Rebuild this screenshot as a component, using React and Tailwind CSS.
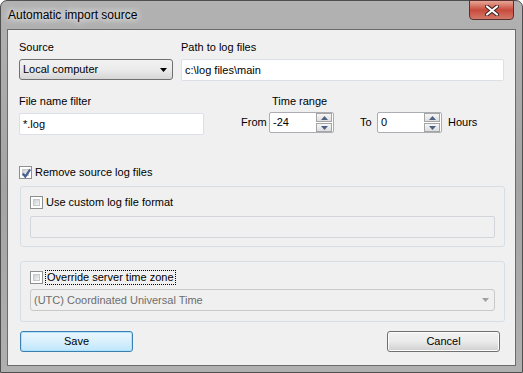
import React from "react";

const font = { fontFamily: '"Liberation Sans", Arial, sans-serif' };

function CheckBox({ checked }) {
  return (
    <span className="w-[13px] h-[13px] border border-[#8e8f8f] bg-white p-[2px] flex shrink-0">
      <span className="flex-1 bg-gradient-to-br from-[#cbcfd5] to-[#f6f6f6] border border-[#c8c8c8] relative">
        {checked && (
          <svg viewBox="0 0 9 9" className="absolute -left-[2px] -top-[2px] w-[11px] h-[11px]">
            <path d="M1.5 4.5 L3.5 7 L7.5 1.2" fill="none" stroke="#4a5f97" strokeWidth="1.8" />
          </svg>
        )}
      </span>
    </span>
  );
}

function Spin({ value }) {
  return (
    <div className="w-[65px] h-[21px] bg-white border border-[#abadb3] rounded-[2px] flex items-center">
      <span className="flex-1 pl-[3px] text-[11px] text-black">{value}</span>
      <div className="flex flex-col gap-px pr-px">
        {[0, 1].map((i) => (
          <span
            key={i}
            className="w-[16px] h-[9px] border border-[#a5a5a5] bg-gradient-to-b from-[#f6f6f6] to-[#dedede] flex items-center justify-center"
          >
            <svg viewBox="0 0 7 4" className="w-[7px] h-[4px]">
              <path d={i === 0 ? "M0 4 L3.5 0 L7 4Z" : "M0 0 L3.5 4 L7 0Z"} fill="#4d6185" />
            </svg>
          </span>
        ))}
      </div>
    </div>
  );
}

export default function App() {
  return (
    <div className="w-[523px] h-[373px] bg-white" style={font}>
      <div className="relative w-[523px] h-[373px] rounded-t-[7px] border border-[#4f4f4f] bg-gradient-to-b from-[#b2b2b2] via-[#a4a4a4] to-[#b0b0b0] flex flex-col">
        {/* title bar */}
        <div className="h-[28px] flex items-center pl-[7px]">
          <span className="text-[12px] text-black [text-shadow:0_0_6px_#fff,0_0_10px_#fff]">Automatic import source</span>
        </div>
        <div className="absolute top-[-1px] right-[8px] w-[45px] h-[20px] rounded-b-[4px] border border-[#5a3030] bg-gradient-to-b from-[#e6a597] via-[#c7493a] to-[#d2786a] flex items-center justify-center">
          <svg viewBox="0 0 14 11" className="w-[14px] h-[11px]">
            <path d="M2 1.5 L12 9.5 M12 1.5 L2 9.5" stroke="#3a2020" strokeWidth="4" strokeLinecap="round" />
            <path d="M2 1.5 L12 9.5 M12 1.5 L2 9.5" stroke="#ffffff" strokeWidth="2.2" strokeLinecap="round" />
          </svg>
        </div>

        {/* client area */}
        <div className="mx-[6px] h-[337px] border border-[#6b6b6b] bg-[#f0f0f0] pl-[11px] pt-[10px] text-[11px] text-black">
          {/* row 1 */}
          <div className="flex gap-[8px]">
            <div className="w-[154px] flex flex-col">
              <span className="h-[15px] leading-[15px]">Source</span>
              <div className="mt-[4px] h-[21px] rounded-[3px] border border-[#707070] bg-gradient-to-b from-[#f2f2f2] via-[#ebebeb] to-[#d6d6d6] flex items-center pl-[3px] pr-[5px]">
                <span className="flex-1">Local computer</span>
                <svg viewBox="0 0 7 4" className="w-[7px] h-[4px]">
                  <path d="M0 0 L3.5 4 L7 0Z" fill="#000" />
                </svg>
              </div>
            </div>
            <div className="w-[323px] flex flex-col">
              <span className="h-[15px] leading-[15px]">Path to log files</span>
              <div className="mt-[4px] h-[22px] rounded-[2px] border border-[#dbdfe6] bg-white flex items-center pl-[3px]">
                c:\log files\main
              </div>
            </div>
          </div>

          {/* row 2 */}
          <div className="flex mt-[13px]">
            <div className="w-[185px] flex flex-col">
              <span className="h-[15px] leading-[15px]">File name filter</span>
              <div className="mt-[4px] h-[22px] rounded-[2px] border border-[#dbdfe6] bg-white flex items-center pl-[3px]">
                *.log
              </div>
            </div>
            <div className="ml-[37px] flex flex-col">
              <span className="h-[15px] leading-[15px] pl-[31px]">Time range</span>
              <div className="mt-[3px] flex items-center">
                <span className="w-[28px]">From</span>
                <Spin value="-24" />
                <span className="ml-[26px] w-[17px]">To</span>
                <Spin value="0" />
                <span className="ml-[6px]">Hours</span>
              </div>
            </div>
          </div>

          {/* remove source */}
          <div className="mt-[30px] flex items-center gap-[3px] h-[15px]">
            <CheckBox checked />
            <span>Remove source log files</span>
          </div>

          {/* group 1 */}
          <div className="mt-[6px] ml-px w-[485px] h-[61px] rounded-[3px] border border-[#d5dfe5] px-[9px] pt-[9px]">
            <div className="flex items-center gap-[3px] h-[13px]">
              <CheckBox />
              <span>Use custom log file format</span>
            </div>
            <div className="mt-[7px] h-[22px] rounded-[2px] border border-[#d2d5da] bg-[#f0f0f0]" />
          </div>

          {/* group 2 */}
          <div className="mt-[14px] ml-px w-[485px] h-[61px] rounded-[3px] border border-[#d5dfe5] px-[9px] pt-[8px]">
            <div className="flex items-center gap-[2px] h-[15px]">
              <CheckBox />
              <span className="border border-dotted border-black px-px leading-[13px]">Override server time zone</span>
            </div>
            <div className="mt-[4px] h-[22px] rounded-[3px] border border-[#c9c9c9] bg-[#f0f0f0] flex items-center pl-[3px] pr-[5px] text-[#6d6d6d]">
              <span className="flex-1">(UTC) Coordinated Universal Time</span>
              <svg viewBox="0 0 7 4" className="w-[7px] h-[4px]">
                <path d="M0 0 L3.5 4 L7 0Z" fill="#a0a0a0" />
              </svg>
            </div>
          </div>

          {/* buttons */}
          <div className="mt-[9px] ml-px w-[480px] flex justify-between">
            <button className="w-[113px] h-[21px] rounded-[3px] border border-[#3c7fb1] bg-gradient-to-b from-[#eaf6fd] via-[#d9f0fc] to-[#bee6fd] shadow-[inset_0_0_0_1px_#aee3fd] text-[11px] text-black">
              Save
            </button>
            <button className="w-[113px] h-[21px] rounded-[3px] border border-[#707070] bg-gradient-to-b from-[#f2f2f2] via-[#ebebeb] to-[#cfcfcf] shadow-[inset_0_0_0_1px_#fcfcfc] text-[11px] text-black">
              Cancel
            </button>
          </div>
        </div>
      </div>
    </div>
  );
}
